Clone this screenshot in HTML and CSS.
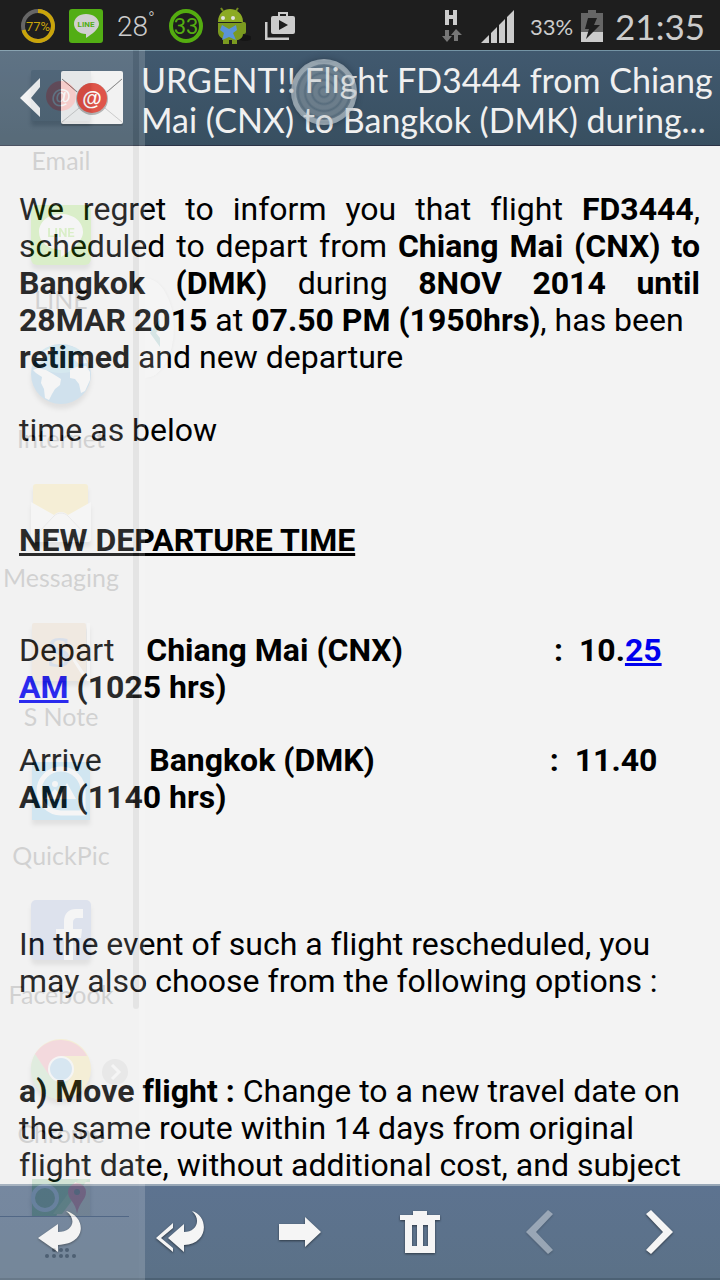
FILE: index.html
```html
<!DOCTYPE html>
<html lang="en">
<head>
    <meta charset="UTF-8">
    <meta name="viewport" content="width=device-width, initial-scale=1.0">
    <title>Email</title>
    <link rel="stylesheet" href="styles.css">
</head>
<body>
    <div class="status-bar">
        <svg width="34" height="34" viewBox="0 0 34 34">
            <circle cx="17" cy="17" r="15" fill="none" stroke="#666" stroke-width="4"/>
            <path d="M17 2a15 15 0 1 1-14.500 19" fill="none" stroke="#c9a40a" stroke-width="4"/>
            <text class="badge-text gold" x="17" y="22" text-anchor="middle">77%</text>
        </svg>
        <svg width="34" height="34" viewBox="0 0 34 34">
            <rect width="34" height="34" rx="3" fill="#52ae14"/>
            <path d="M17 5c7 0 13 4 13 10 0 5-7 10-13 14v-4C10 25 5 20 5 15 5 9 10 5 17 5z" fill="#d0d0d0"/>
            <text class="line-text" x="17" y="18" text-anchor="middle">LINE</text>
        </svg>
        <span class="temp">28<sup>°</sup></span>
        <svg width="34" height="34" viewBox="0 0 34 34">
            <circle cx="17" cy="17" r="15" fill="none" stroke="#54ad10" stroke-width="4"/>
            <text class="count-text" x="17" y="25" text-anchor="middle">33</text>
        </svg>
        <svg width="34" height="38" viewBox="0 0 34 38">
            <ellipse cx="28" cy="31" rx="7" ry="3" fill="#151515"/>
            <path d="M6 4 4 1M19 4l2-3" stroke="#738c20" stroke-width="2"/>
            <path d="M1 15C1 6 7 2 13 2s13 4 13 13z" fill="#8caa24"/>
            <path d="M1 16h25v11c0 4-4 6-6 6v4h-5v-4h-3v4H6v-5c-3-2-5-4-5-7z" fill="#7b9a20"/>
            <rect x="24" y="15" width="5" height="12" rx="2" fill="#7b9a20"/>
            <circle cx="6" cy="11" r="2" fill="#e2e2e2"/>
            <circle cx="16" cy="11" r="2" fill="#e2e2e2"/>
            <path d="M5 18l7 4 7-4 1 5-4 3 3 7-7-3-7 3 2-7-4-3z" fill="#5b93d8"/>
        </svg>
        <svg width="30" height="28" viewBox="0 0 30 28">
            <path d="M1 10v17h23" fill="none" stroke="#ccc" stroke-width="3"/>
            <rect x="6" y="4" width="24" height="18" rx="2" fill="#ccc"/>
            <path d="M14 4V1h8v3" fill="none" stroke="#ccc" stroke-width="2"/>
            <path d="M14 8l9 5-9 5z" fill="#1e1e1e"/>
        </svg>
        <div class="status-right">
            <svg class="network" width="20" height="34" viewBox="0 0 20 34">
                <path d="M3 1h4v5h4V1h4v15h-4v-6H7v6H3z" fill="#ccc"/>
                <path d="M3 21h4v6h3l-5 6-5-6h3zM12 32h4v-6h4l-6-6-5 6h3z" fill="#777"/>
            </svg>
            <svg class="signal" width="34" height="34" viewBox="0 0 34 34">
                <path d="M1 34l8-8v8zM11 34V24l6-6v16zM19 34V16l6-6v24zM27 34V8l7-7v33z" fill="#ccc"/>
            </svg>
            <span class="percent">33%</span>
            <svg width="22" height="32" viewBox="0 0 22 32">
                <path d="M7 0h8v3h7v19H0V3h7z" fill="#666"/>
                <path d="M0 22h22v10H0z" fill="#ccc"/>
                <path d="M7 8h9l-3 7h6L5 29l3-10H4z" fill="#1e1e1e"/>
            </svg>
            <span class="clock">21:35</span>
        </div>
    </div>

    <header class="header">
        <button class="back" aria-label="Back">
            <svg width="104" height="56" viewBox="0 0 104 56">
                <path d="M20 8v9L11 28l9 10v9L0 28z" fill="#f5f5f5"/>
                <rect x="41" y="2" width="62" height="54" rx="2" fill="#2c3e4c"/>
                <rect x="41" y="1" width="62" height="53" rx="2" fill="#f3f3f3"/>
                <path d="M42 9l30 25 30-25M42 52l22-18M102 52L80 34" fill="none" stroke="#c5c5c5" stroke-width="1"/>
                <path d="M42 9l15 13M102 9L87 22" stroke="#777" stroke-width="1"/>
                <circle cx="72" cy="29" r="16" fill="#a8a8a8"/>
                <circle cx="72" cy="28" r="15" fill="#dc3528"/>
                <text class="at-text" x="72" y="35" text-anchor="middle">@</text>
            </svg>
        </button>
        <h1 class="subject">URGENT!! Flight FD3444 from Chiang<br>Mai (CNX) to Bangkok (DMK) during...</h1>
        <div class="touch"></div>
    </header>

    <main class="message">
        <p class="notice">We regret to inform you that flight <b>FD3444</b>, scheduled to depart from <b>Chiang Mai (CNX) to Bangkok (DMK)</b> during <b>8NOV 2014 until 28MAR 2015</b> at <b>07.50 PM (1950hrs)</b>, has been<br><b>retimed</b> and new departure</p>
        <p class="gap-large">time as below</p>
        <h2 class="gap-large">NEW DEPARTURE TIME</h2>
        <p>Depart&nbsp;&nbsp;&nbsp; <b>Chiang Mai (CNX)&nbsp;&nbsp;&nbsp;&nbsp;&nbsp;&nbsp;&nbsp;&nbsp;&nbsp;&nbsp;&nbsp;&nbsp;&nbsp;&nbsp;&nbsp;&nbsp;&nbsp;&nbsp; :&nbsp; 10.<a href="#">25 AM</a> (1025 hrs)</b></p>
        <p class="gap-huge">Arrive&nbsp;&nbsp;&nbsp;&nbsp;&nbsp; <b>Bangkok (DMK)&nbsp;&nbsp;&nbsp;&nbsp;&nbsp;&nbsp;&nbsp;&nbsp;&nbsp;&nbsp;&nbsp;&nbsp;&nbsp;&nbsp;&nbsp;&nbsp;&nbsp;&nbsp;&nbsp;&nbsp;&nbsp; :&nbsp; 11.40 AM (1140 hrs)</b></p>
        <p class="gap-large">In the event of such a flight rescheduled, you may also choose from the following options :</p>
        <p><b>a) Move flight :</b> Change to a new travel date on the same route within 14 days from original flight date, without additional cost, and subject</p>
    </main>

    <footer class="toolbar">
        <button aria-label="Reply">
            <svg class="icon" viewBox="0 0 60 60"><path d="M8 36L28 22v8c14 0 20-12 8-21 20 5 22 33-8 34v7z"/></svg>
        </button>
        <button aria-label="Reply all">
            <svg class="icon" viewBox="0 0 60 60"><path d="M6 36L23 21v5L11 36l12 10v4zM18 36l16-14v8c12 0 18-12 8-21 17 5 17 33-8 34v7z"/></svg>
        </button>
        <button aria-label="Forward">
            <svg class="icon" viewBox="0 0 60 60"><path d="M9 22h26v-7l16 15-16 15v-7H9z"/></svg>
        </button>
        <button aria-label="Delete">
            <svg class="icon" viewBox="0 0 60 60"><path fill-rule="evenodd" d="M10 13h13V9h14v4h13v5h-5v33H15V18h-5zM22 23v21h5V23zM33 23v21h5V23z"/></svg>
        </button>
        <button aria-label="Previous" disabled>
            <svg class="icon" viewBox="0 0 60 60"><path d="M38 8l5 4-17 18 17 18-5 4-22-22z"/></svg>
        </button>
        <button aria-label="Next">
            <svg class="icon" viewBox="0 0 60 60"><path d="M21 8l-5 4 17 18-17 18 5 4 22-22z"/></svg>
        </button>
    </footer>

    <!-- multi window tray, slides over the email -->
    <aside class="tray">
        <ul class="tray-list">
            <li>
                <svg class="app" viewBox="0 0 60 60">
                    <rect y="4" width="60" height="51" rx="2" fill="#a2adb5"/>
                    <circle cx="30" cy="30" r="15" fill="#ff1b10"/>
                    <text class="at-text" x="30" y="37" text-anchor="middle">@</text>
                </svg>
                <span>Email</span>
            </li>
            <li>
                <svg class="app" viewBox="0 0 60 60">
                    <rect width="60" height="60" rx="6" fill="#68d80b"/>
                    <path d="M30 9c13 0 22 8 22 18 0 9-12 19-22 25v-7C17 44 8 37 8 27 8 17 17 9 30 9z" fill="#fff"/>
                    <text class="line-big" x="30" y="32" text-anchor="middle">LINE</text>
                </svg>
                <span>LINE</span>
            </li>
            <li>
                <svg class="app" viewBox="0 0 60 60">
                    <circle cx="30" cy="30" r="30" fill="#2e8fd0"/>
                    <ellipse cx="30" cy="15" rx="24" ry="14" fill="#4cb4dc"/>
                    <path d="M2 26l5-2 8 2 7 4 8 5-1 6-5 4-3 5-3 6-4-2-1-9-3-6 1-6-6-4zM4 16l7-8 9-4 3 2-6 4-3 5-6 4zM39 26l7-3 9-1 4 6v8l-5 11-4 2-2-9-4-5-5-1zM42 14l5-6 7 6 2 5-8 1z" fill="#fff"/>
                </svg>
                <span>Internet</span>
            </li>
            <li>
                <svg class="app" viewBox="0 0 60 60">
                    <rect x="2" y="1" width="55" height="40" rx="3" fill="#ffd84e"/>
                    <path d="M0 19l23 13c4-4 10-4 14 0l23-13v37c0 2-1 3-3 3H3c-2 0-3-1-3-3z" fill="#fff"/>
                    <path d="M6 51l17-18c4-4 10-4 14 0l17 18" fill="none" stroke="#bbb"/>
                </svg>
                <span>Messaging</span>
            </li>
            <li>
                <svg class="app" viewBox="0 0 60 60">
                    <rect x="1" y="1" width="54" height="58" rx="2" fill="#e0b88e"/>
                    <path d="M56 1h3v58h-3zM42 34l17 25-5-1-12-19z" fill="#fff"/>
                    <text class="note-text" x="28" y="45" text-anchor="middle">S</text>
                </svg>
                <span>S Note</span>
            </li>
            <li>
                <svg class="app" viewBox="0 0 60 60">
                    <rect x="1" y="1" width="58" height="58" fill="#36a9e6"/>
                    <path d="M52 50V30a22 22 0 1 0-22 22h25" fill="none" stroke="#fff" stroke-width="5"/>
                    <circle cx="24" cy="23" r="3" fill="#fff"/>
                    <path d="M14 38l10-10 5 6 7-12 9 16z" fill="#fff"/>
                </svg>
                <span>QuickPic</span>
            </li>
            <li>
                <svg class="app" viewBox="0 0 60 60">
                    <rect width="60" height="60" rx="5" fill="#7893d0"/>
                    <path d="M33 60V38h-8v-9h8v-7c0-9 5-13 12-13h7v9h-5c-4 0-5 2-5 5v6h9l-1 9h-8v22z" fill="#fff"/>
                </svg>
                <span>Facebook</span>
            </li>
            <li>
                <svg class="app" viewBox="0 0 60 60">
                    <circle cx="30" cy="30" r="30" fill="#f8d64e"/>
                    <path d="M30 30L4 15A30 30 0 0 0 27 60l14-24z" fill="#8bcb83"/>
                    <path d="M4 15a30 30 0 0 1 52 2H30L18 36z" fill="#f2637a"/>
                    <circle cx="30" cy="30" r="13" fill="#fff"/>
                    <circle cx="30" cy="30" r="11" fill="#58a9e5"/>
                </svg>
                <span>Chrome</span>
                <i class="more"><svg width="26" height="26" viewBox="0 0 26 26"><path d="M10 6l7 7-7 7" fill="none" stroke="#fff" stroke-width="3"/></svg></i>
            </li>
            <li>
                <svg class="app" viewBox="0 0 60 60">
                    <rect x="1" y="1" width="58" height="58" fill="#35984d"/>
                    <path d="M26 36L44 4h15v55H20z" fill="#d4cfae"/>
                    <path d="M22 36L48 1h9L31 36z" fill="#63b35b"/>
                    <circle cx="14" cy="20" r="12" fill="#277e45" stroke="#a0c7e8" stroke-width="4"/>
                    <path d="M46 36C45 24 37 22 37 14a9 9 0 0 1 18 0c0 8-7 10-9 22z" fill="#c42045"/>
                    <circle cx="46" cy="14" r="3" fill="#222"/>
                </svg>
            </li>
        </ul>
        <div class="tray-foot">
            <svg width="32" height="10" viewBox="0 0 32 10" fill="#111">
                <circle cx="9" cy="2" r="2"/><circle cx="16" cy="2" r="2"/><circle cx="22" cy="2" r="2"/>
                <circle cx="2" cy="8" r="2"/><circle cx="9" cy="8" r="2"/><circle cx="16" cy="8" r="2"/><circle cx="22" cy="8" r="2"/><circle cx="29" cy="8" r="2"/>
            </svg>
        </div>
        <div class="scrollbar"></div>
        <div class="handle">
            <svg width="10" height="28" viewBox="0 0 10 28"><path d="M10 0v9L6 14l4 5v9L0 14z" fill="#4fa3a5"/></svg>
        </div>
    </aside>
</body>
</html>
```
FILE: styles.css
```css
* {
    box-sizing: border-box;
}
body {
    margin: 0;
    height: 100vh;
    display: flex;
    flex-direction: column;
    position: relative;
    overflow: hidden;
    background: #f3f3f3;
    color: #000;
    font-family: Roboto, sans-serif;
    font-variant-ligatures: none;
}
button {
    padding: 0;
    border: 0;
    background: none;
    cursor: pointer;
}
svg {
    display: block;
    flex: none;
}

/* status bar */
.status-bar {
    display: flex;
    align-items: center;
    gap: 14px;
    height: 50px;
    flex: none;
    padding: 2px 15px 0 21px;
    background: #1e1e1e;
    color: #ccc;
}
.status-right {
    display: flex;
    align-items: center;
    gap: 8px;
    margin-left: auto;
    font-family: Lato, sans-serif;
}
.network {
    margin-right: 10px;
}
.signal {
    margin-right: 8px;
}
.temp {
    display: flex;
    font-size: 28px;
    font-weight: 300;
}
.temp sup {
    font-size: 18px;
    line-height: 18px;
}
.percent {
    font-size: 22px;
}
.clock {
    margin-left: 4px;
    font-size: 35px;
}
.badge-text {
    font: 13px Roboto, sans-serif;
}
.gold {
    fill: #c9a40a;
}
.line-text {
    font: bold 8px Roboto, sans-serif;
    fill: #52ae14;
}
.line-big {
    font: bold 13px Roboto, sans-serif;
    fill: #68d80b;
}
.count-text {
    font: 22px Roboto, sans-serif;
    fill: #54ad10;
}
.at-text {
    font: bold 20px "Liberation Sans", sans-serif;
    fill: #fff;
}
.note-text {
    font: bold 44px "Liberation Serif", serif;
    fill: #5a82c0;
}

/* header */
.header {
    display: flex;
    align-items: center;
    gap: 17px;
    height: 96px;
    flex: none;
    position: relative;
    padding-left: 20px;
    background: linear-gradient(#41596f, #384f60);
    border-top: 1px solid #7494a5;
    border-bottom: 1px solid #2b3346;
}
.subject {
    margin: 0;
    padding-top: 3px;
    color: #f0f0f0;
    font-family: Lato, sans-serif;
    font-size: 34px;
    font-weight: 400;
    line-height: 40px;
    white-space: nowrap;
}
.touch {
    position: absolute;
    left: 291px;
    top: 8px;
    width: 66px;
    height: 66px;
    border: 5px solid rgba(190, 200, 205, 0.5);
    border-radius: 50%;
    background: repeating-radial-gradient(circle, rgba(180, 190, 195, 0.4) 0, rgba(180, 190, 195, 0.4) 3px, rgba(150, 165, 175, 0.3) 5px, rgba(180, 190, 195, 0.4) 7px);
    box-shadow: 0 0 6px rgba(20, 30, 40, 0.4);
}

/* message */
.message {
    flex: 1;
    min-height: 0;
    overflow: hidden;
    padding: 45px 20px 0 19px;
    font-size: 32px;
    line-height: 37px;
}
.message p,
.message h2 {
    margin: 0 0 36px;
}
.message h2 {
    font-size: 32px;
    line-height: 37px;
    text-decoration: underline;
}
.message .gap-large {
    margin-bottom: 73px;
}
.message .gap-huge {
    margin-bottom: 110px;
}
.message a {
    color: #0000ee;
}
.notice {
    text-align: justify;
}

/* toolbar */
.toolbar {
    display: grid;
    grid-template-columns: repeat(6, 1fr);
    height: 96px;
    flex: none;
    background: linear-gradient(#5d7390, #5b7187);
    border-top: 2px solid #98a7b6;
    border-bottom: 2px solid #4c6174;
}
.toolbar button {
    display: flex;
    align-items: center;
    justify-content: center;
}
.icon {
    width: 60px;
    height: 60px;
    fill: #f5f5f5;
    filter: drop-shadow(0 1px 1px rgba(0, 0, 0, 0.5));
}
.toolbar button:disabled .icon {
    opacity: 0.4;
}

/* app tray */
.tray {
    position: absolute;
    top: 50px;
    bottom: 0;
    left: 0;
    width: 145px;
    display: flex;
    flex-direction: column;
    opacity: 0.18;
    background: #ececec;
    border-right: 6px solid #fafafa;
}
.tray-list {
    flex: 1;
    min-height: 0;
    overflow: hidden;
    margin: 0;
    padding: 16px 17px 0 0;
    list-style: none;
}
.tray-list li {
    display: flex;
    flex-direction: column;
    align-items: center;
    gap: 22px;
    height: 139px;
    position: relative;
    color: #333;
    font-family: Lato, sans-serif;
    font-size: 25px;
    line-height: 24px;
}
.app {
    width: 60px;
    height: 60px;
    overflow: visible;
    filter: drop-shadow(0 5px 2px rgba(0, 0, 0, 0.4));
}
.more {
    position: absolute;
    right: -6px;
    top: 20px;
    border-radius: 50%;
    background: #b4b4b4;
}
.tray-foot {
    height: 64px;
    width: 129px;
    padding: 31px 0 0 45px;
    border-top: 1px solid #223a66;
}
.scrollbar {
    position: absolute;
    top: 0;
    right: 0;
    width: 6px;
    height: 78%;
    border-radius: 0 0 3px 3px;
    background: #a0a0a0;
}
.handle {
    position: absolute;
    left: 145px;
    top: 228px;
    width: 29px;
    height: 100px;
    padding: 41px 0 0 5px;
    border-radius: 0 29px 29px 0 / 0 50px 50px 0;
    background: #fff;
    box-shadow: 1px 0 3px rgba(0, 0, 0, 0.15);
}
```
